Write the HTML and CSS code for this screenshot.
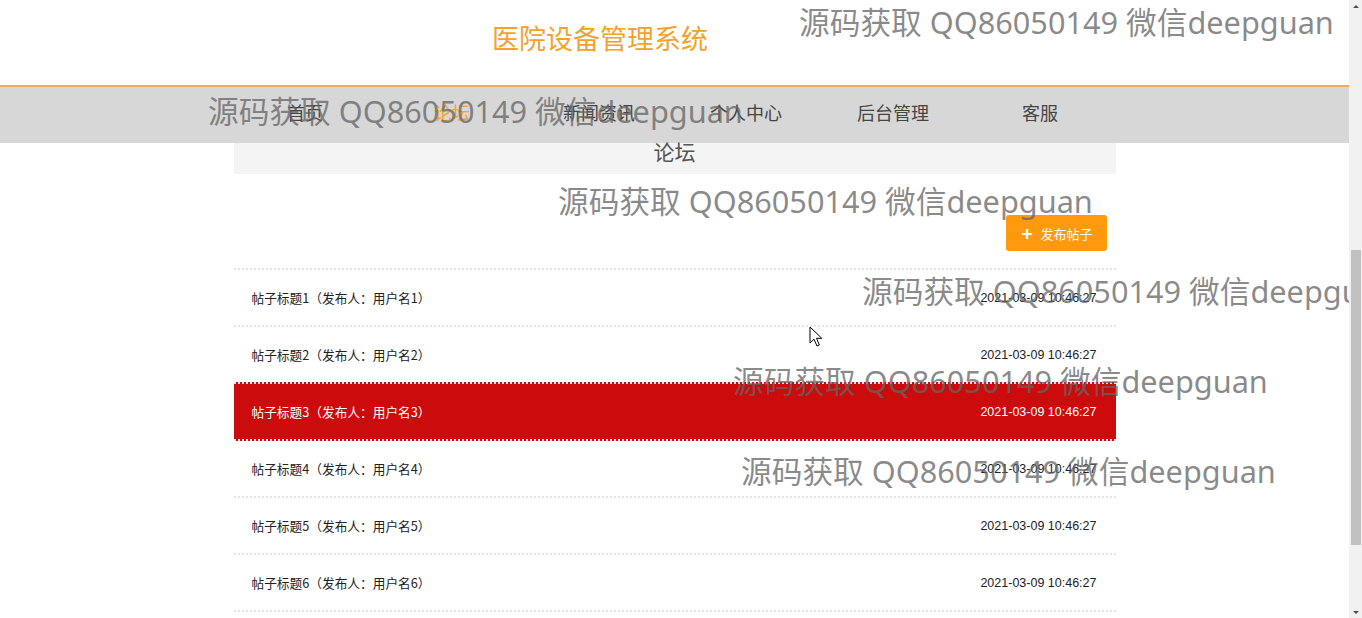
FILE: index.html
```html
<!DOCTYPE html>
<html lang="zh-CN">
<head>
<meta charset="utf-8">
<title>医院设备管理系统 - 论坛</title>
<link rel="stylesheet" href="styles.css">
</head>
<body>
<div class="window">
  <div class="page">
    <header class="header">
      <h1 class="site-title">医院设备管理系统</h1>
    </header>
    <nav class="nav">
      <ul class="nav-list">
        <li class="nav-item">首页</li>
        <li class="nav-item active">论坛</li>
        <li class="nav-item">新闻资讯</li>
        <li class="nav-item">个人中心</li>
        <li class="nav-item">后台管理</li>
        <li class="nav-item">客服</li>
      </ul>
    </nav>
    <main class="container">
      <div class="section-title">论坛</div>
      <div class="toolbar">
        <button class="btn-add"><span class="btn-plus">+</span>发布帖子</button>
      </div>
      <ul class="post-list">
        <li class="post"><span class="post-title">帖子标题1（发布人：用户名1）</span><span class="post-time">2021-03-09 10:46:27</span></li>
        <li class="post"><span class="post-title">帖子标题2（发布人：用户名2）</span><span class="post-time">2021-03-09 10:46:27</span></li>
        <li class="post hover"><span class="post-title">帖子标题3（发布人：用户名3）</span><span class="post-time">2021-03-09 10:46:27</span></li>
        <li class="post"><span class="post-title">帖子标题4（发布人：用户名4）</span><span class="post-time">2021-03-09 10:46:27</span></li>
        <li class="post"><span class="post-title">帖子标题5（发布人：用户名5）</span><span class="post-time">2021-03-09 10:46:27</span></li>
        <li class="post"><span class="post-title">帖子标题6（发布人：用户名6）</span><span class="post-time">2021-03-09 10:46:27</span></li>
        <li class="post"><span class="post-title">帖子标题7（发布人：用户名7）</span><span class="post-time">2021-03-09 10:46:27</span></li>
      </ul>
    </main>

    <div class="wm wm1">源码获取 QQ86050149 微信deepguan</div>
    <div class="wm wm2">源码获取 QQ86050149 微信deepguan</div>
    <div class="wm wm3">源码获取 QQ86050149 微信deepguan</div>
    <div class="wm wm4">源码获取 QQ86050149 微信deepguan</div>
    <div class="wm wm5">源码获取 QQ86050149 微信deepguan</div>
    <div class="wm wm6">源码获取 QQ86050149 微信deepguan</div>

    <svg class="cursor" width="14" height="22" viewBox="0 0 14 22">
      <path d="M1 1 L1 17 L5 13.2 L8 20 L10.4 19 L7.5 12.3 L12.8 12.3 Z" fill="#fff" stroke="#000" stroke-width="1" stroke-linejoin="miter"/>
    </svg>
  </div>
  <div class="scrollbar">
    <div class="sb-arrow sb-up"></div>
    <div class="sb-track">
      <div class="sb-thumb"></div>
    </div>
    <div class="sb-arrow sb-down"></div>
  </div>
</div>
</body>
</html>
```
FILE: styles.css
```css
* { box-sizing: border-box; }
html, body {
  margin: 0;
  padding: 0;
  height: 618px;
  overflow: hidden;
  background: #fff;
  font-family: "Noto Sans CJK SC", "Noto Sans", sans-serif;
}
.window {
  display: flex;
  height: 618px;
}
.page {
  flex: 1;
  position: relative;
  overflow: hidden;
  height: 618px;
}
.header {
  height: 85px;
  display: flex;
  align-items: center;
  justify-content: center;
  padding: 0 149px 10px 0;
}
.site-title {
  margin: 0;
  font-size: 27px;
  font-weight: normal;
  color: #f4a22b;
  line-height: 1;
}
.nav {
  border-top: 2px solid #e9ac62;
  background: #d7d7d7;
  height: 58px;
}
.nav-list {
  list-style: none;
  margin: 0 auto;
  padding: 0;
  width: 882px;
  display: flex;
}
.nav-item {
  width: 147px;
  text-align: center;
  line-height: 50px;
  font-size: 18px;
  color: #444;
  position: relative;
  left: -2px;
}
.nav-item.active { color: #f4a22b; }

.container {
  width: 882px;
  margin: 0 auto;
}
.section-title {
  background: #f4f4f4;
  height: 31px;
  text-align: center;
  font-size: 21px;
  line-height: 17px;
  color: #555;
}
.toolbar {
  display: flex;
  justify-content: flex-end;
  padding: 41px 9px 0 0;
}
.btn-add {
  height: 36px;
  width: 101px;
  border: none;
  border-radius: 3px;
  background: #fe9a0c;
  color: #fff;
  font-family: "Noto Sans CJK SC", sans-serif;
  font-size: 13px;
  display: flex;
  align-items: center;
  justify-content: center;
  padding: 0 0 0 2px;
}
.btn-plus {
  font-size: 19px;
  font-weight: bold;
  margin-right: 8px;
  line-height: 1;
  position: relative;
  top: -1px;
}
.post-list {
  list-style: none;
  margin: 17px 0 0;
  padding: 0;
}
.post {
  height: 59px;
  margin-top: -2px;
  border-top: 2px dotted #e6e6e6;
  border-bottom: 2px dotted #e6e6e6;
  display: flex;
  align-items: center;
  justify-content: space-between;
  padding: 0 19px 0 18px;
  color: #222;
}
.post:first-child { margin-top: 0; }
.post.hover {
  background: #cc0c0c;
  color: #fff;
  border-color: #f4e4e4;
}
.post-title {
  font-size: 12.7px;
}
.post-time {
  font-family: "Liberation Sans", Arial, sans-serif;
  font-size: 12.5px;
}

.wm {
  position: absolute;
  white-space: nowrap;
  font-family: "Noto Sans", "Noto Sans CJK SC", sans-serif;
  font-size: 30.7px;
  line-height: 40px;
  color: rgba(100, 100, 100, 0.75);
  pointer-events: none;
}
.wm1 { left: 799px; top: 2px; }
.wm2 { left: 208px; top: 91px; }
.wm3 { left: 558px; top: 181px; }
.wm4 { left: 862px; top: 271px; }
.wm5 { left: 733px; top: 361px; }
.wm6 { left: 741px; top: 451px; }

.cursor {
  position: absolute;
  left: 809px;
  top: 326px;
}

.scrollbar {
  width: 13px;
  background: #f1f1f1;
  display: flex;
  flex-direction: column;
}
.sb-arrow {
  height: 12px;
  display: flex;
  align-items: center;
  justify-content: center;
}
.sb-up::before {
  content: "";
  border-left: 3px solid transparent;
  border-right: 3px solid transparent;
  border-bottom: 3px solid #505050;
}
.sb-down::before {
  content: "";
  border-left: 3px solid transparent;
  border-right: 3px solid transparent;
  border-top: 3px solid #505050;
}
.sb-track {
  flex: 1;
  padding: 238px 0 0 2px;
}
.sb-thumb {
  height: 295px;
  width: 10px;
  background: #c1c1c1;
}
```
